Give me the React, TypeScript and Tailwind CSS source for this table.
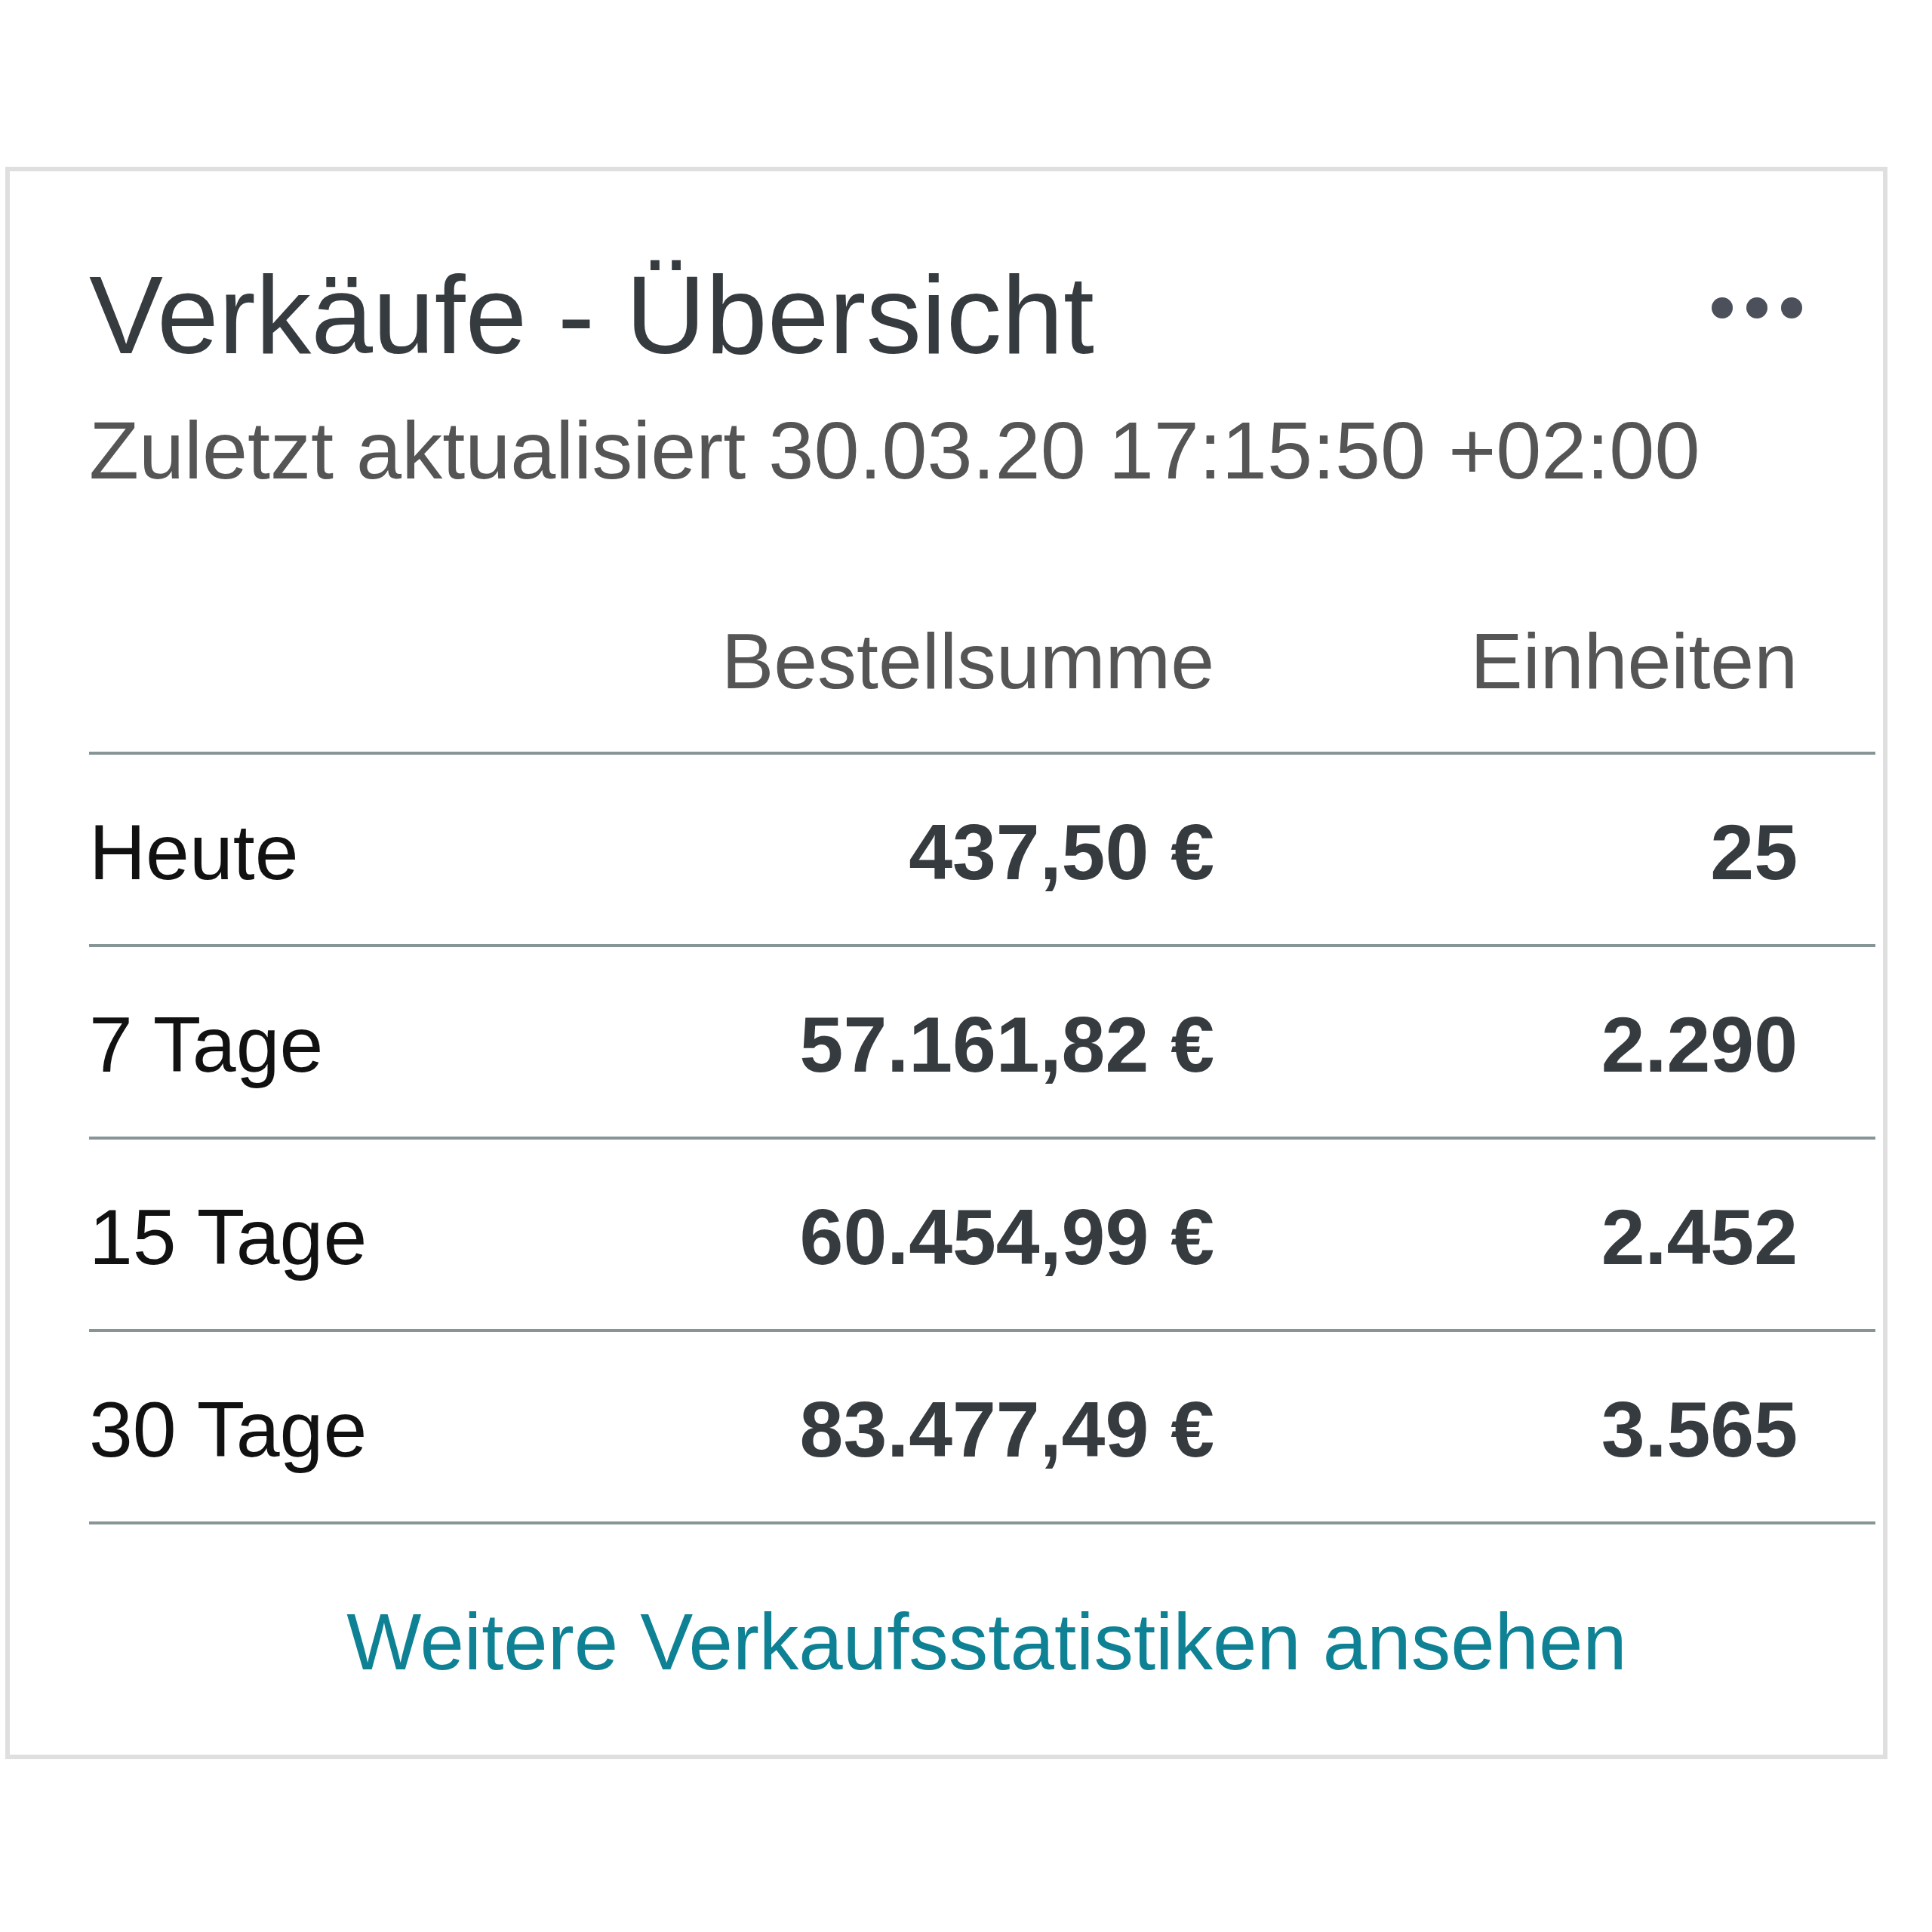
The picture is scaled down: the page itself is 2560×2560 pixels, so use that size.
import React from "react";

const rows = [
  { label: "Heute", sum: "437,50 €", units: "25" },
  { label: "7 Tage", sum: "57.161,82 €", units: "2.290" },
  { label: "15 Tage", sum: "60.454,99 €", units: "2.452" },
  { label: "30 Tage", sum: "83.477,49 €", units: "3.565" },
];

export default function App() {
  return (
    <div
      className="w-[2560px] h-[2560px] bg-white pt-[221px] pl-[7px]"
      style={{ fontFamily: '"Liberation Sans", Arial, sans-serif' }}
    >
      <div className="w-[2494px] h-[2110px] border-[6px] border-[#dfdfdf] bg-white flex flex-col pl-[105px] pr-[10px] pt-[101px]">
        {/* Header */}
        <div className="flex items-start justify-between pr-[97px]">
          <div className="flex flex-col">
            <h1 className="text-[147px] leading-[178px] text-[#363b3f] font-normal">
              Verkäufe - Übersicht
            </h1>
            <p className="mt-[26px] text-[108px] leading-[129px] text-[#555555]">
              Zuletzt aktualisiert 30.03.20 17:15:50 +02:00
            </p>
          </div>
          <div className="flex gap-[18px] mt-[66px]">
            <span className="block w-[28px] h-[28px] rounded-full bg-[#4b505a]" />
            <span className="block w-[28px] h-[28px] rounded-full bg-[#4b505a]" />
            <span className="block w-[28px] h-[28px] rounded-full bg-[#4b505a]" />
          </div>
        </div>

        {/* Table */}
        <div className="mt-[153px] flex flex-col">
          <div className="grid grid-cols-[805px_686px_773px] pr-[103px] pb-[58px] border-b-4 border-[#879596] text-[104px] leading-[124px] text-[#555555]">
            <div />
            <div className="text-right">Bestellsumme</div>
            <div className="text-right">Einheiten</div>
          </div>
          {rows.map((r) => (
            <div
              key={r.label}
              className="grid grid-cols-[805px_686px_773px] pr-[103px] pt-[67px] pb-[60px] border-b-4 border-[#879596] text-[104px] leading-[124px]"
            >
              <div className="text-[#111111]">{r.label}</div>
              <div className="text-right font-bold text-[#363b3f]">{r.sum}</div>
              <div className="text-right font-bold text-[#363b3f]">{r.units}</div>
            </div>
          ))}
        </div>

        {/* Link */}
        <div className="mt-[94px] flex justify-center pl-[12px]">
          <a className="text-[105px] leading-[124px] text-[#0e8294] cursor-pointer">
            Weitere Verkaufsstatistiken ansehen
          </a>
        </div>
      </div>
    </div>
  );
}
